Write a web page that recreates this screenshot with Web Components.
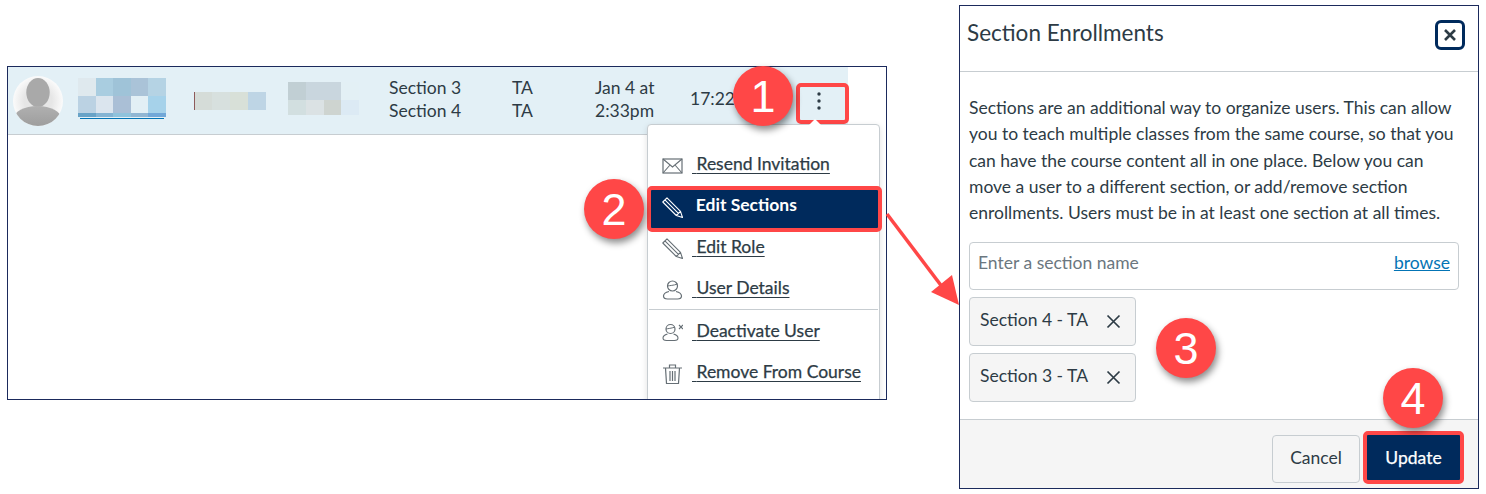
<!DOCTYPE html>
<html lang="en">
<head>
<meta charset="utf-8">
<title>Section Enrollments</title>
<style>
  html, body { margin: 0; background: #fff; }
  body { font-family: Lato, "Open Sans", sans-serif; color: #2d3b45; }
</style>
</head>
<body>
<help-page>
  <roster-panel slot="left"></roster-panel>
  <enroll-dialog slot="right"></enroll-dialog>
</help-page>

<script>
const ICONS = {
  mail: '<rect x="1" y="4" width="19" height="14" fill="none" stroke="currentColor" stroke-width="1.2"/><path d="M1 4l9.5 8L20 4M1 18l7-8M20 18l-7-8" fill="none" stroke="currentColor" stroke-width="1.1"/>',
  pencil: '<path d="M5 .8L18.500 14.300l2 6.200-6.200-2L.8 5zM2.900 2.900l13.500 13.500M18.500 14.300l-4.200 4.200" fill="none" stroke="currentColor" stroke-width="1.100" stroke-linejoin="round"/>',
  user: '<circle cx="10.5" cy="7" r="5" fill="none" stroke="currentColor" stroke-width="1.2"/><path d="M5.5 7c2-.5 6-.5 10-2" fill="none" stroke="currentColor" stroke-width="1"/><path d="M7 12.5c-3 .7-5.5 2-5.5 4.500 0 2.200 2 3 4 3h10c2 0 4-.8 4-3 0-2.500-2.500-3.800-5.500-4.500" fill="none" stroke="currentColor" stroke-width="1.2"/>',
  userx: '<circle cx="8.500" cy="7" r="4.500" fill="none" stroke="currentColor" stroke-width="1.2"/><path d="M4 7c2-.5 5-.5 9-2" fill="none" stroke="currentColor" stroke-width="1"/><path d="M5.500 12c-2.500.7-4.500 1.800-4.500 4 0 1.800 1.500 2.500 3.500 2.500h8c2 0 3.500-.7 3.500-2.500 0-2.200-2-3.300-4.500-4M17 3l4 4M21 3l-4 4" fill="none" stroke="currentColor" stroke-width="1.1"/>',
  trash: '<path d="M1 5h19M7.500 5V2h6v3M3.500 5l1 15.500h12l1-15.500M8 8v10M10.500 8v10M13 8v10" fill="none" stroke="currentColor" stroke-width="1.2"/>'
};

// Lienzo de la captura: dos ventanas y las anotaciones rojas encima
class HelpPage extends HTMLElement {
  constructor() {
    super();
    this.attachShadow({ mode: 'open' });
    this.shadowRoot.innerHTML = `
      <style>
        :host { display: block; position: relative; width: 1486px; height: 494px; overflow: hidden; }
        .windows { display: flex; align-items: flex-start; gap: 72px; padding: 5px 0 0 7px; }
        svg { position: absolute; left: 0; top: 0; pointer-events: none; }
      </style>
      <div class="windows">
        <slot name="left"></slot>
        <slot name="right"></slot>
      </div>
      <svg width="1486" height="494" viewBox="0 0 1486 494" aria-hidden="true">
        <path d="M887 214L943 288" stroke="#ff4747" stroke-width="3.500" fill="none"/>
        <path d="M959 305L931 292L952 275z" fill="#ff4747"/>
      </svg>
      <step-badge style="left:763px;top:96px">1</step-badge>
      <step-badge style="left:614px;top:209px">2</step-badge>
      <step-badge style="left:1186px;top:348px">3</step-badge>
      <step-badge style="left:1413px;top:398px">4</step-badge>
    `;
  }
}

class StepBadge extends HTMLElement {
  constructor() {
    super();
    this.attachShadow({ mode: 'open' });
    this.shadowRoot.innerHTML = `
      <style>
        :host {
          position: absolute; width: 60px; height: 60px; margin: -30px 0 0 -30px;
          display: flex; align-items: center; justify-content: center;
          border-radius: 50%; background: #ff4747; color: #fff;
          font: 45px/1 "Liberation Sans", Arial, sans-serif;
          box-shadow: 2px 4px 7px rgba(0, 0, 0, .45);
        }
      </style>
      <slot></slot>
    `;
  }
}

class RosterPanel extends HTMLElement {
  constructor() {
    super();
    this.attachShadow({ mode: 'open' });
    this.shadowRoot.innerHTML = `
      <style>
        :host {
          display: block; position: relative; box-sizing: border-box;
          width: 880px; height: 334px; margin-top: 61px;
          border: 1px solid #1b2a5c; overflow: hidden;
        }
        action-menu { position: absolute; left: 639px; top: 57px; }
      </style>
      <roster-row></roster-row>
      <action-menu></action-menu>
    `;
  }
}

class BlurBlock extends HTMLElement {
  constructor() {
    super();
    this.attachShadow({ mode: 'open' });
  }
  connectedCallback() {
    const cols = this.getAttribute('cols');
    const rows = this.getAttribute('rows');
    const cells = this.getAttribute('colors').split(' ').map(c => `<i style="background:${c}"></i>`).join('');
    this.shadowRoot.innerHTML = `
      <style>
        :host { display: grid; grid-template-columns: repeat(${cols}, 1fr); grid-template-rows: ${rows}; }
      </style>
      ${cells}
    `;
  }
}

class RosterRow extends HTMLElement {
  constructor() {
    super();
    this.attachShadow({ mode: 'open' });
    this.shadowRoot.innerHTML = `
      <style>
        :host {
          display: grid; box-sizing: border-box; width: 840px; height: 68px;
          grid-template-columns: 70px 116px 94px 101px 123px 83px 95px 106px 1fr;
          align-items: center; background: #e3f0f6; border-bottom: 1px solid #c7cdd1;
          font-size: 17.500px; line-height: 23px;
        }
        .avatar { margin-left: 5px; width: 50px; height: 50px; display: block; }
        .name { width: 88px; margin-bottom: 4px; }
        .name b { display: block; height: 1.500px; margin: 1px 2px 0; background: #0374b5; }
        .b2 { width: 72px; position: relative; }
        .b2 u { position: absolute; left: 0; top: 0; width: 1px; height: 18px; background: #8d5a5a; }
        .b3 { width: 71px; margin-bottom: 4px; }
        .txt { margin-bottom: 4px; }
        .kebab {
          box-sizing: border-box; width: 53px; height: 41px; margin-top: 6px;
          border: 4px solid #ff4747; border-radius: 5px; padding: 5px 8px 0 0;
          display: flex; align-items: flex-start; justify-content: center;
        }
      </style>
      <svg class="avatar" viewBox="0 0 50 50" aria-hidden="true">
        <defs>
          <radialGradient id="halo"><stop offset=".55" stop-color="#e6e6e6"/><stop offset="1" stop-color="#fbfbfb"/></radialGradient>
          <linearGradient id="body" x1="0" y1="0" x2="0" y2="1"><stop offset="0" stop-color="#b0b0b0"/><stop offset="1" stop-color="#989898"/></linearGradient>
          <clipPath id="disc"><circle cx="25" cy="25" r="25"/></clipPath>
        </defs>
        <circle cx="25" cy="25" r="25" fill="url(#halo)"/>
        <g clip-path="url(#disc)">
          <ellipse cx="25" cy="16.500" rx="11.700" ry="14.500" fill="#a9a9a9"/>
          <ellipse cx="24.500" cy="43" rx="24" ry="13" fill="url(#body)"/>
        </g>
      </svg>
      <div class="name">
        <blur-block cols="5" rows="18px 17px 4px" colors="#dfe9ee #a9cde0 #9fc3d8 #aac3d8 #b5d3e4 #bbd2e3 #dbe5ee #aabfd6 #e2eff5 #a6d2ea #68a3c7 #84b4d3 #90c3dc #90b6d3 #72a8d8"></blur-block>
        <b></b>
      </div>
      <div class="b2">
        <blur-block cols="4" rows="18px" colors="#d5dcd8 #d7e0de #d8e0d8 #bed5e5"></blur-block>
        <u></u>
      </div>
      <blur-block class="b3" cols="4" rows="18px 15px" colors="#c1cfd4 #c9d6de #c9d6de #e3f0f5 #d2dfe0 #dbe2e4 #ced4d0 #dceaf4"></blur-block>
      <div class="txt">Section 3<br>Section 4</div>
      <div class="txt">TA<br>TA</div>
      <div class="txt">Jan 4 at<br>2:33pm</div>
      <div class="txt">17:22</div>
      <div class="kebab" aria-label="Actions">
        <svg width="4" height="18" viewBox="0 0 4 18" aria-hidden="true" fill="#2d3b45"><circle cx="2" cy="2" r="1.700"/><circle cx="2" cy="9" r="1.700"/><circle cx="2" cy="16" r="1.700"/></svg>
      </div>
    `;
  }
}

class ActionMenu extends HTMLElement {
  constructor() {
    super();
    this.attachShadow({ mode: 'open' });
    this.shadowRoot.innerHTML = `
      <style>
        :host {
          display: block; box-sizing: border-box; width: 233px; height: 290px;
          background: #fff; border: 1px solid #c7cdd1; border-radius: 4px;
          box-shadow: 0 2px 6px rgba(0, 0, 0, .12); padding-top: 17.500px;
        }
        :host::before {
          content: ""; position: absolute; left: 161px; top: -6px;
          border: 6px solid transparent; border-top: 0; border-bottom-color: #fff;
        }
        hr { border: 0; border-top: 1px solid #c7cdd1; margin: 1px 1px 0; }
      </style>
      <menu-item icon="mail">Resend Invitation</menu-item>
      <menu-item icon="pencil" selected>Edit Sections</menu-item>
      <menu-item icon="pencil">Edit Role</menu-item>
      <menu-item icon="user">User Details</menu-item>
      <hr>
      <menu-item icon="userx">Deactivate User</menu-item>
      <menu-item icon="trash">Remove From Course</menu-item>
    `;
  }
}

class MenuItem extends HTMLElement {
  constructor() {
    super();
    this.attachShadow({ mode: 'open' });
  }
  connectedCallback() {
    const icon = ICONS[this.getAttribute('icon')];
    this.shadowRoot.innerHTML = `
      <style>
        :host {
          display: flex; align-items: center; box-sizing: border-box; height: 41px;
          padding-left: 14px; color: #2d3b45; font-size: 17.500px;
          -webkit-text-stroke: .25px;
        }
        svg { width: 21px; height: 21px; flex: none; color: #666f75; margin-top: 4px; }
        span { margin-left: 9px; text-decoration: underline; text-underline-offset: 3px; white-space: pre; }
        :host([selected]) {
          background: #002a5c; color: #fff; font-weight: 700; height: 46px; margin: 2.500px -3px -6.500px -1px;
          border: 4.500px solid #ff4747; border-radius: 5px; padding-left: 10.500px; position: relative;
          -webkit-text-stroke: 0;
        }
        :host([selected]) svg { color: #fff; margin-top: -4px; }
        :host([selected]) span { text-decoration: none; position: relative; top: -5px; }
      </style>
      <svg viewBox="0 0 21 21" aria-hidden="true">${icon}</svg>
      <span>&nbsp;<slot></slot></span>
    `;
  }
}

class EnrollDialog extends HTMLElement {
  constructor() {
    super();
    this.attachShadow({ mode: 'open' });
    this.shadowRoot.innerHTML = `
      <style>
        :host {
          display: flex; flex-direction: column; box-sizing: border-box;
          width: 520px; height: 484px; border: 1px solid #1b2a5c; background: #fff;
        }
        header {
          box-sizing: border-box; height: 66px; flex: none; padding: 0 13px 0 7px;
          display: flex; justify-content: space-between; align-items: flex-start;
          border-bottom: 1px solid #c7cdd1;
        }
        h2 { margin: 12px 0 0; font-size: 22.500px; line-height: 30px; font-weight: 400; }
        .close {
          box-sizing: border-box; width: 30px; height: 30px; margin-top: 14px;
          border: 3px solid #002a5c; border-radius: 6px;
          display: flex; align-items: center; justify-content: center;
        }
        main { flex: 1; padding: 23px 19px 0 9px; }
        p { margin: 0 0 16px; font-size: 17.500px; line-height: 26.300px; }
        .search {
          box-sizing: border-box; height: 48px; padding: 7px 8px 0 8px; margin-bottom: 7px;
          border: 1px solid #c7cdd1; border-radius: 4px;
          display: flex; justify-content: space-between; font-size: 17.500px; line-height: 26px;
        }
        .search span { color: #6b7780; }
        .search a { color: #0374b5; text-decoration: underline; }
        footer {
          box-sizing: border-box; height: 69px; flex: none; background: #f5f5f5;
          border-top: 1px solid #c7cdd1; padding: 11px 14px 0 0;
          display: flex; justify-content: flex-end; align-items: flex-start; gap: 3px;
          font-size: 17.500px;
        }
        .cancel {
          box-sizing: border-box; width: 88px; height: 48px; margin-top: 4px; padding-bottom: 4px;
          background: #f5f5f5; border: 1px solid #c7cdd1; border-radius: 4px;
          display: flex; align-items: center; justify-content: center;
        }
        .update {
          box-sizing: border-box; width: 101px; height: 53px;
          background: #002a5c; color: #fff; -webkit-text-stroke: .25px;
          border: 4.500px solid #ff4747; border-radius: 5px;
          display: flex; align-items: center; justify-content: center;
        }
      </style>
      <header>
        <h2>Section Enrollments</h2>
        <div class="close" aria-label="Close">
          <svg width="14" height="14" viewBox="0 0 14 14" aria-hidden="true"><path d="M2 2l10 10M12 2L2 12" stroke="#2d3b45" stroke-width="2.600" fill="none"/></svg>
        </div>
      </header>
      <main>
        <p>Sections are an additional way to organize users. This can allow you to teach multiple classes from the same course, so that you can have the course content all in one place. Below you can move a user to a different section, or add/remove section enrollments. Users must be in at least one section at all times.</p>
        <div class="search"><span>Enter a section name</span><a>browse</a></div>
        <section-chip>Section 4 - TA</section-chip>
        <section-chip>Section 3 - TA</section-chip>
      </main>
      <footer>
        <div class="cancel">Cancel</div>
        <div class="update">Update</div>
      </footer>
    `;
  }
}

class SectionChip extends HTMLElement {
  constructor() {
    super();
    this.attachShadow({ mode: 'open' });
    this.shadowRoot.innerHTML = `
      <style>
        :host {
          display: flex; align-items: center; justify-content: space-between; box-sizing: border-box;
          width: 167px; height: 49px; margin-bottom: 7px; padding: 0 14px 4px 10px;
          background: #f5f5f5; border: 1px solid #c7cdd1; border-radius: 4px;
          font-size: 17.500px;
        }
        svg { margin-top: 4px; }
      </style>
      <slot></slot>
      <svg width="15" height="15" viewBox="0 0 15 15" aria-hidden="true"><path d="M1.500 1.500l12 12M13.500 1.500l-12 12" stroke="#2d3b45" stroke-width="1.700" fill="none"/></svg>
    `;
  }
}

customElements.define('step-badge', StepBadge);
customElements.define('blur-block', BlurBlock);
customElements.define('menu-item', MenuItem);
customElements.define('section-chip', SectionChip);
customElements.define('action-menu', ActionMenu);
customElements.define('roster-row', RosterRow);
customElements.define('roster-panel', RosterPanel);
customElements.define('enroll-dialog', EnrollDialog);
customElements.define('help-page', HelpPage);
</script>
</body>
</html>
